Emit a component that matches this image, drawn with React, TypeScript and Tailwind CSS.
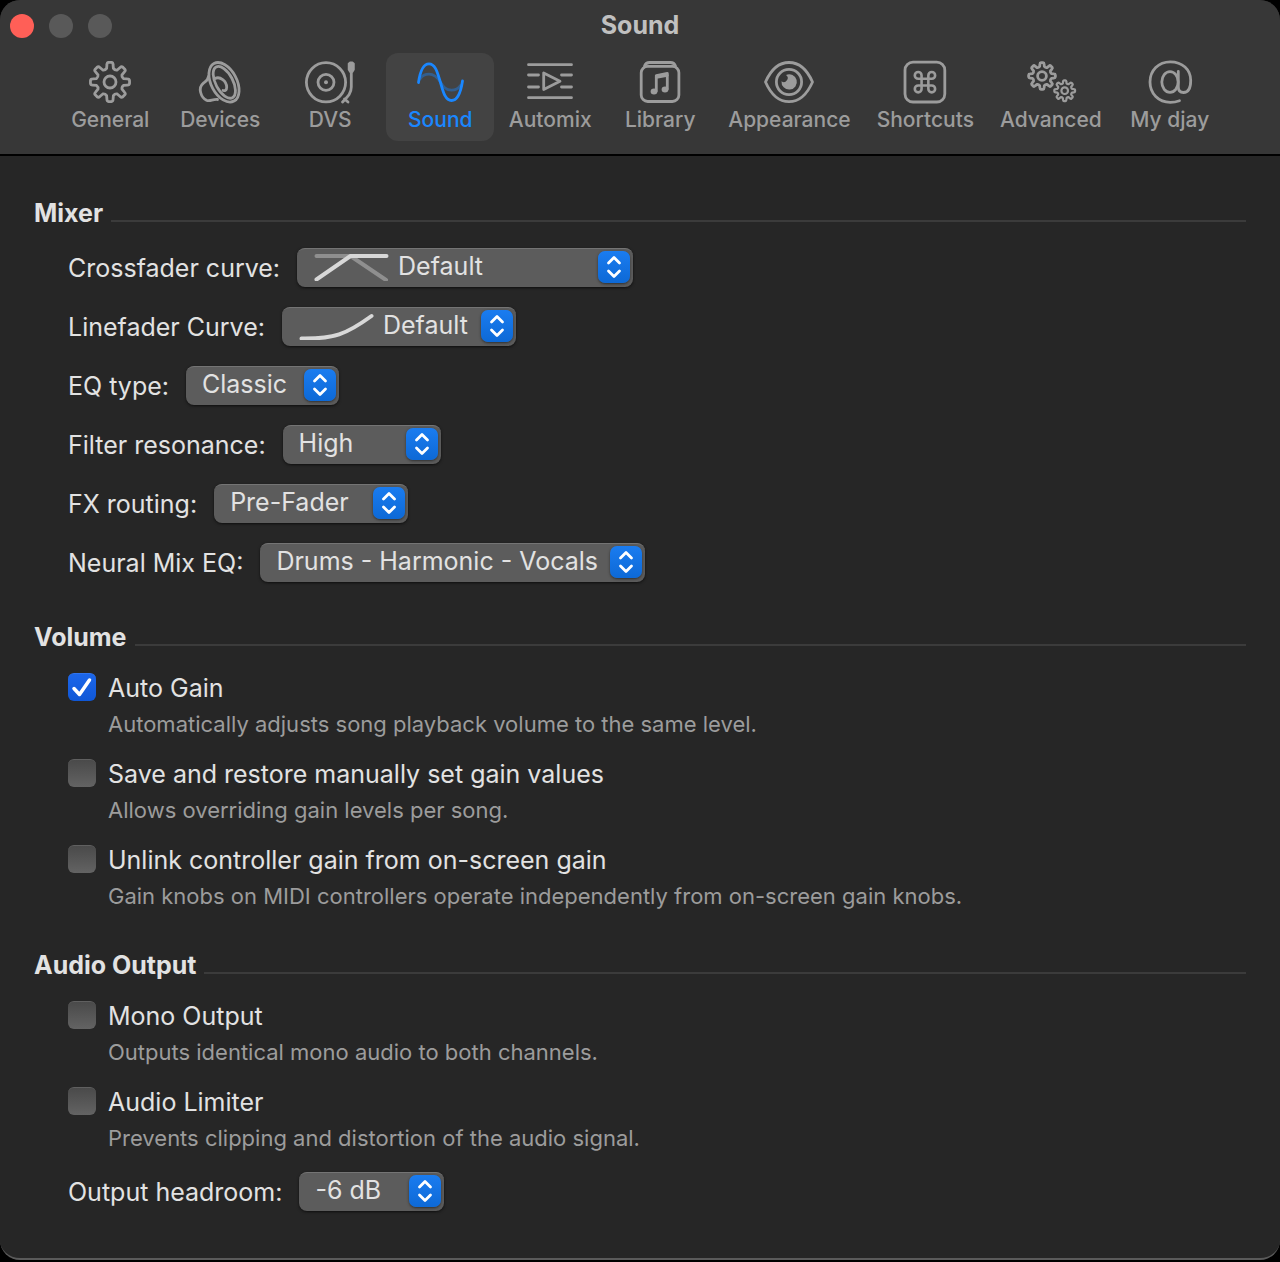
import React, { useState } from 'react';
import clsx from 'clsx';

// Outline of a gear with eight rounded teeth
const gearPath = (cx: number, cy: number, outer: number, inner: number) => {
  const at = (r: number, deg: number) => {
    const a = (deg * Math.PI) / 180;
    return `${(cx + r * Math.cos(a)).toFixed(2)} ${(cy + r * Math.sin(a)).toFixed(2)}`;
  };
  const parts: string[] = [];
  for (let i = 0; i < 8; i++) {
    const c = i * 45 - 90;
    const mid = outer * 0.9;
    parts.push(
      `${i === 0 ? 'M' : 'L'}${at(inner, c - 14)}`,
      `L${at(mid, c - 10)}`,
      `Q${at(outer, c - 9)} ${at(outer, c - 4)}`,
      `L${at(outer, c + 4)}`,
      `Q${at(outer, c + 9)} ${at(mid, c + 10)}`,
      `L${at(inner, c + 14)}`,
      `Q${at(inner * 0.9, c + 22.5)} ${at(inner, c + 31)}`,
    );
  }
  return parts.join(' ') + 'Z';
};

const icons: Record<string, React.ReactNode> = {
  General: (
    <>
      <path d={gearPath(25, 22, 19.6, 14)} />
      <circle cx="25" cy="22" r="6" />
    </>
  ),
  Devices: (
    <>
      <ellipse cx="29" cy="22.3" rx="12.8" ry="21.3" transform="rotate(-28 29 22.3)" />
      <ellipse cx="29.3" cy="22.3" rx="8.6" ry="17.4" transform="rotate(-28 29.3 22.3)" />
      <path d="M13.500 16.500c-.5 4-3 5-5.300 6.800C2.500 28 6 37.500 11.500 40.200c3.500 1.600 6-1.200 11-.7" />
      <path d="M20 18.500c5-2.500 11.700 2.500 11.700 8.800 0 2.700-1.500 3.700-3.700 3.200" />
    </>
  ),
  DVS: (
    <>
      <circle cx="21" cy="22.300" r="19.600" />
      <circle cx="21" cy="22.300" r="8" />
      <circle cx="21" cy="22.300" r="2" fill="currentColor" stroke="none" />
      <path d="M43.500 3.500l1.500-1.200h2.500l1.500 1.200v6l-1.500 2.500h-2.500l-1.500-2.500z" fill="currentColor" strokeWidth="1.500" />
      <path d="M46.300 11v16c0 6-3 9-8.800 15M39.500 39l3.500 3" />
    </>
  ),
  Sound: (
    <>
      <path d="M3.500 22.500C5 12 8 3.800 14 3.800c7 0 9 11.200 11.500 18.700 2.500 8.500 4.500 18 11 18s9.500-9.500 11-19.500" />
      <path d="M5 19c2-3 5-4.800 9-4.800 6 0 9 4 11.500 8s5 8 11 8c4 0 7-1.700 9-4.700" opacity="0.4" />
    </>
  ),
  Automix: (
    <>
      <path d="M3.500 4.700h43M3.500 15h10M36.500 15h10M3.500 27h10M36.500 27h10M3.500 37.700h43" />
      <path d="M18.700 13v16.500L35 21.300z" />
    </>
  ),
  Library: (
    <>
      <rect x="6.200" y="6.300" width="37.700" height="35.200" rx="6.500" />
      <path d="M9.500 6c1-2.500 2.500-3.500 5-3.500h21c2.500 0 4 1 5 3.500" />
      <path d="M21.300 31V15.500l11-2.200V29" />
      <path d="M21.300 17.500l11-2.200" />
      <ellipse cx="19" cy="31.500" rx="2" ry="1.600" fill="currentColor" />
      <ellipse cx="30" cy="29.500" rx="2" ry="1.600" fill="currentColor" />
    </>
  ),
  Appearance: (
    <>
      <path d="M1.500 22C7 9.500 14.500 2.500 25 2.500S43 9.500 48.500 22C43 34.500 35.500 41.700 25 41.700S7 34.500 1.500 22z" />
      <circle cx="25" cy="22" r="12.600" />
      <path d="M22 14.900a7.700 7.700 0 1 1-4.500 6.300 3.800 3.800 0 0 0 4.500-6.300z" fill="currentColor" stroke="none" />
    </>
  ),
  Shortcuts: (
    <>
      <rect x="5" y="2.200" width="39.800" height="39.800" rx="8" />
      <path d="M15 6v12a3 3 0 1 0 3-3H6a3 3 0 1 0 3 3V6a3 3 0 1 0-3 3h12a3 3 0 1 0-3-3" transform="translate(11.400 8.600) scale(1.130)" strokeWidth="2.300" />
    </>
  ),
  Advanced: (
    <>
      <path d={gearPath(16, 16, 13.4, 9.8)} />
      <circle cx="16" cy="16" r="4.400" />
      <path d={gearPath(38.7, 30.7, 10.4, 7.6)} strokeWidth="2.200" />
      <circle cx="38.700" cy="30.700" r="3.300" strokeWidth="2.200" />
    </>
  ),
  'My djay': (
    <>
      <path d="M34.500 40.700c-3 1.100-6 1.600-9.200 1.600C13.500 42.300 5 33.500 5 22S13.500 1.800 25.300 1.800c12 0 20.400 7.700 20.400 18.700 0 7.500-2.700 12-7.200 12-3.500 0-5.200-2-5.200-5.500V11.500" />
      <ellipse cx="25" cy="22" rx="8.200" ry="10.300" />
    </>
  ),
};

const Tab: React.FC<{ name: string; active: boolean; onClick: () => void }> = ({ name, active, onClick }) => (
  <button
    onClick={onClick}
    className={clsx(
      'flex min-w-[108px] flex-col items-center gap-0.5 rounded-xl px-3 py-[7px]',
      active ? 'bg-[#434343] text-[#1a87ff]' : 'text-[#9c9c9c]',
    )}
  >
    <svg viewBox="0 0 50 44" className="h-11 w-[50px] overflow-visible" fill="none" stroke="currentColor" strokeWidth="2.800" strokeLinecap="round" strokeLinejoin="round">
      {icons[name]}
    </svg>
    <span className="text-[21px] leading-7 font-medium whitespace-nowrap">{name}</span>
  </button>
);

const Section: React.FC<{ title: string; children: React.ReactNode }> = ({ title, children }) => (
  <section>
    <div className="mb-[19px] flex items-center gap-2">
      <h2 className="text-[25px] leading-8 font-bold">{title}</h2>
      <div className="mt-4 h-0.5 flex-1 bg-[#3b3b3b]" />
    </div>
    <div className="flex flex-col gap-5 pl-[34px]">{children}</div>
  </section>
);

interface PopupProps {
  id: string;
  label: string;
  options: string[];
  width: string;
  curve?: React.ReactNode;
}

const Popup: React.FC<PopupProps> = ({ id, label, options, width, curve }) => (
  <div className="flex h-[39px] items-center gap-[17px]">
    <label htmlFor={id} className="text-[25px] leading-8 whitespace-nowrap">{label}</label>
    <div className={clsx('relative h-full', width)}>
      <select
        id={id}
        className={clsx(
          'h-full w-full appearance-none rounded-lg border-t border-[#747474] bg-[#5c5c5c] pr-10 pb-1 text-[25px] leading-8 shadow-sm shadow-black/50',
          curve ? 'pl-[101px]' : 'pl-4',
        )}
      >
        {options.map(o => <option key={o}>{o}</option>)}
      </select>
      {curve && (
        <svg viewBox="0 0 76 28" className="pointer-events-none absolute top-[5px] left-4 h-7 w-[76px]" fill="none" stroke="#d8d8d8" strokeWidth="4" strokeLinecap="round" strokeLinejoin="round">
          {curve}
        </svg>
      )}
      <span className="pointer-events-none absolute top-[3px] right-[3px] flex size-8 items-center justify-center rounded-[7px] bg-linear-to-b from-[#1a7cf0] to-[#0d69d6] shadow-sm shadow-black/40">
        <svg viewBox="0 0 16 24" className="h-6 w-4" fill="none" stroke="#fff" strokeWidth="2.800" strokeLinecap="round" strokeLinejoin="round">
          <path d="M2.500 8L8 2.500 13.500 8M2.500 16L8 21.500 13.500 16" />
        </svg>
      </span>
    </div>
  </div>
);

const Option: React.FC<{ id: string; label: string; hint: string; on?: boolean }> = ({ id, label, hint, on = false }) => {
  const [checked, setChecked] = useState(on);
  return (
    <div>
      <div className="flex gap-3">
        <div className="relative size-7">
          <input
            id={id}
            type="checkbox"
            checked={checked}
            onChange={e => setChecked(e.target.checked)}
            aria-describedby={`${id}-hint`}
            className="mt-px block size-7 appearance-none rounded-md border-t border-[#606060] bg-linear-to-b from-[#4a4a4a] to-[#636363] checked:border-[#2f74ee] checked:from-[#1c66ea] checked:to-[#0f57d6]"
          />
          {checked && (
            <svg viewBox="0 0 28 28" className="pointer-events-none absolute top-px left-0 size-7" fill="none" stroke="#fff" strokeWidth="3.500" strokeLinecap="round" strokeLinejoin="round">
              <path d="M6 15.500l5.500 6L21.500 7" />
            </svg>
          )}
        </div>
        <label htmlFor={id} className="text-[25px] leading-8">{label}</label>
      </div>
      <p id={`${id}-hint`} className="mt-1.5 pl-10 text-[22px] leading-7 text-[#9c9c9c]">{hint}</p>
    </div>
  );
};

const App: React.FC = () => {
  const [tab, setTab] = useState('Sound');

  return (
    <div className="min-h-screen bg-black font-['Inter',sans-serif] text-[#e2e2e2]">
      <main className="overflow-hidden rounded-[20px] border-b-2 border-[#5a5a5a] bg-[#262626] pb-[47px]">
        <header className="border-b-2 border-black bg-[#373737] pb-[13px]">
          <div className="relative flex h-[53px] items-center justify-center">
            <div className="absolute top-3.5 left-2.5 flex gap-[15px]">
              <button aria-label="Close" className="size-6 rounded-full bg-[#ff5f57]" />
              <button aria-label="Minimize" className="size-6 rounded-full bg-[#595959]" />
              <button aria-label="Zoom" className="size-6 rounded-full bg-[#595959]" />
            </div>
            <h1 className="pb-1 text-[25px] leading-8 font-bold text-[#c0c0c0]">Sound</h1>
          </div>
          <nav className="flex justify-center gap-0.5">
            {Object.keys(icons).map(name => (
              <Tab key={name} name={name} active={tab === name} onClick={() => setTab(name)} />
            ))}
          </nav>
        </header>

        <div className="flex flex-col gap-[39px] px-[34px] pt-[41px]">
          <Section title="Mixer">
            <Popup
              id="crossfader"
              label="Crossfader curve:"
              options={['Default']}
              width="w-[336px]"
              curve={
                <>
                  <path d="M3.500 3H37.500L73 27" stroke="#8f8f8f" />
                  <path d="M3.500 26.500L37.500 3H73.500" />
                </>
              }
            />
            <Popup
              id="linefader"
              label="Linefader Curve:"
              options={['Default']}
              width="w-[234px]"
              curve={<path d="M3.500 26.500C36 27 48 22.500 73.500 4" />}
            />
            <Popup id="eq" label="EQ type:" options={['Classic']} width="w-[153px]" />
            <Popup id="resonance" label="Filter resonance:" options={['High']} width="w-[158px]" />
            <Popup id="fx" label="FX routing:" options={['Pre-Fader']} width="w-[194px]" />
            <Popup id="neural" label="Neural Mix EQ:" options={['Drums - Harmonic - Vocals']} width="w-[385px]" />
          </Section>

          <Section title="Volume">
            <Option id="auto-gain" label="Auto Gain" hint="Automatically adjusts song playback volume to the same level." on />
            <Option id="save-gain" label="Save and restore manually set gain values" hint="Allows overriding gain levels per song." />
            <Option id="unlink-gain" label="Unlink controller gain from on-screen gain" hint="Gain knobs on MIDI controllers operate independently from on-screen gain knobs." />
          </Section>

          <Section title="Audio Output">
            <Option id="mono" label="Mono Output" hint="Outputs identical mono audio to both channels." />
            <Option id="limiter" label="Audio Limiter" hint="Prevents clipping and distortion of the audio signal." />
            <Popup id="headroom" label="Output headroom:" options={['-6 dB']} width="w-[145px]" />
          </Section>
        </div>
      </main>
    </div>
  );
};

export default App;
